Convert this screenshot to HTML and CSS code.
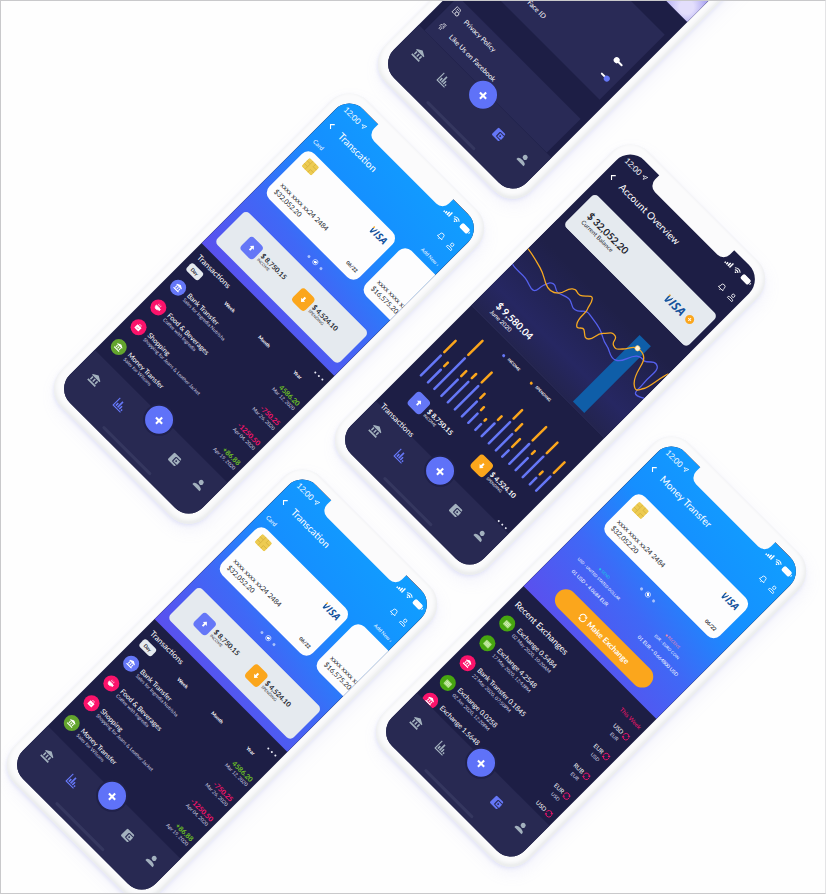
FILE: index.html
```html
<!DOCTYPE html>
<html lang="en">
<head>
<meta charset="utf-8">
<meta name="viewport" content="width=device-width, initial-scale=1">
<title>Wallet app screens</title>
<link rel="stylesheet" href="styles.css">
</head>
<body>
<svg class="sprite" aria-hidden="true">
  <symbol id="back" viewBox="0 0 8 8"><path d="M5.5 1 2.5 4l3 3" fill="none" stroke="currentColor" stroke-width="1.1"/></symbol>
  <symbol id="bell" viewBox="0 0 10 10"><path d="M1.5 7.5h7L7.6 6V4.2a2.6 2.6 0 0 0-5.2 0V6zM4 8.8h2" fill="none" stroke="currentColor" stroke-width=".9"/></symbol>
  <symbol id="user" viewBox="0 0 10 10"><circle cx="5" cy="3.2" r="1.8" fill="none" stroke="currentColor" stroke-width=".9"/><path d="M1.5 9V7.6c1-1.4 6-1.4 7 0V9z" fill="none" stroke="currentColor" stroke-width=".9"/></symbol>
  <symbol id="arrow" viewBox="0 0 8 8"><path d="M7.4.8 4.6 7.2 4 4.2 1 3.6z" fill="none" stroke="currentColor" stroke-width=".9"/></symbol>
  <symbol id="signal" viewBox="0 0 10 8"><path d="M1 7.5V5.8M3.6 7.5V4.4M6.2 7.5V2.8M8.8 7.5V1" stroke="currentColor" stroke-width="1.7"/></symbol>
  <symbol id="wifi" viewBox="0 0 10 8"><path d="M.8 3.2c2.4-2.3 6-2.3 8.4 0M2.5 5c1.5-1.4 3.5-1.4 5 0" fill="none" stroke="currentColor" stroke-width="1.2"/><path d="M3.7 6.2c.8-.7 1.8-.7 2.6 0L5 7.7z" fill="currentColor"/></symbol>
  <symbol id="battery" viewBox="0 0 13 7"><rect x=".5" y=".5" width="10.5" height="6" rx="1.8" fill="currentColor"/><path d="M12.2 2.5v2" stroke="currentColor" stroke-width="1"/></symbol>
  <symbol id="bank" viewBox="0 0 12 12"><path d="M6 .4 11.3 3.3v1.1H.7V3.3zM1.9 5.2h1.6v3.6H1.9zM5.2 5.2h1.6v3.6H5.2zM8.5 5.2h1.6v3.6H8.5zM.7 9.6h10.6v1.7H.7z" fill="currentColor"/></symbol>
  <symbol id="chart" viewBox="0 0 12 12"><path d="M1 .8V11h10.5" fill="none" stroke="currentColor" stroke-width="1.2"/><path d="M3.4 9.5V6M5.8 9.5V1.8M8.2 9.5V5.5M10.6 9.5V7.8" stroke="currentColor" stroke-width="1.6"/></symbol>
  <symbol id="wallet" viewBox="0 0 12 12"><path d="M2.2 1h7.6A1.2 1.2 0 0 1 11 2.2V2.8H6.2a1.2 1.2 0 0 0-1.2 1.2v4a1.2 1.2 0 0 0 1.2 1.2H11v.6A1.2 1.2 0 0 1 9.8 11H2.2A1.2 1.2 0 0 1 1 9.8V2.2A1.2 1.2 0 0 1 2.2 1zM6.2 3.8h5.4v4.4H6.2zM8.2 5.1a.9.9 0 1 0 0 1.8.9.9 0 0 0 0-1.8z" fill="currentColor" fill-rule="evenodd"/></symbol>
  <symbol id="person" viewBox="0 0 12 12"><circle cx="6" cy="3.4" r="2.5" fill="currentColor"/><path d="M1 10.8V9.3C1.8 6.6 10.2 6.6 11 9.3v1.5z" fill="currentColor"/></symbol>
  <symbol id="plus" viewBox="0 0 10 10"><path d="M5 1v8M1 5h8" stroke="currentColor" stroke-width="1.9"/></symbol>
  <symbol id="up" viewBox="0 0 8 8"><path d="M4 .8 6.8 3.8H5V7H3V3.8H1.2z" fill="currentColor"/></symbol>
  <symbol id="down" viewBox="0 0 8 8"><path d="M4 7.2 6.8 4.2H5V1H3v3.2H1.2z" fill="currentColor"/></symbol>
  <symbol id="food" viewBox="0 0 10 10"><path d="M1 4.5h6.5c0 2.5-1 4-3.2 4S1 7 1 4.5zM7.5 5h1.2c.8 1.5-.4 2.3-1.5 2.3M2.5 1l.6 2.4M4.5.8v2.6M6.6 1 6 3.4" fill="currentColor" stroke="currentColor" stroke-width=".8"/></symbol>
  <symbol id="bag" viewBox="0 0 10 10"><path d="M1.5 3.2h7V9h-7z" fill="currentColor"/><path d="M3.4 4.5V2.6a1.6 1.6 0 0 1 3.2 0v1.9" fill="none" stroke="currentColor" stroke-width=".8"/><path d="M3.6 6.5h2.8" stroke="#f4136b" stroke-width=".9"/></symbol>
  <symbol id="cash" viewBox="0 0 10 10"><rect x="1" y="1.8" width="8" height="6.4" rx=".8" fill="#a8dc7e"/><path d="M2 3.5h6M2 5h6M2 6.5h6" stroke="#e6f7d8" stroke-width=".7"/></symbol>
  <symbol id="swap" viewBox="0 0 10 10"><path d="M1.3 6A3.7 3.7 0 0 1 7.5 2.2M8.7 4A3.7 3.7 0 0 1 2.5 7.8" fill="none" stroke="currentColor" stroke-width="1.1"/><path d="M8.6.6v2.8H5.8zM1.4 9.4V6.6h2.8z" fill="currentColor"/></symbol>
  <symbol id="chip" viewBox="0 0 14 12"><rect width="14" height="12" rx="2" fill="#edcb52"/><path d="M0 4h5V0M0 8h5v4M9 0v4h5M9 12V8h5M5 4v4" fill="none" stroke="#d3ae3c" stroke-width=".7"/></symbol>
  <symbol id="policy" viewBox="0 0 10 10"><path d="M1.5 1h6v3M1.5 1v8h3M3 3h3M3 5h2" fill="none" stroke="currentColor" stroke-width=".8"/><circle cx="7" cy="7" r="2.2" fill="none" stroke="currentColor" stroke-width=".9"/></symbol>
  <symbol id="fb" viewBox="0 0 10 10"><path d="M7.5 1C5 .6 4.2 1.5 4.2 3.2v.9H2.8v1.9h1.4v3h1.9V6h1.2l.3-1.9H6.1v-.8c0-.6.4-.7 1.4-.6z" fill="none" stroke="currentColor" stroke-width=".8"/></symbol>
</svg>

<main class="stage">

  <article class="phone phone-settings">
    <div class="screen">
      <div class="content">
        <div class="photo"></div>
        <section class="group group-security">
          <div class="option"><span class="option-text option-indent"></span><input class="toggle" type="checkbox" aria-label="Notifications"></div>
          <label class="option"><span class="option-text option-indent">Face ID</span><input class="toggle" type="checkbox" checked></label>
        </section>
        <section class="group group-about">
          <a class="option" href="#privacy"><svg class="i10"><use href="#policy"/></svg><span class="option-text">Privacy Policy</span></a>
          <a class="option" href="#facebook"><svg class="i10"><use href="#fb"/></svg><span class="option-text">Like Us on Facebook</span></a>
        </section>
      </div>
      <nav class="tabbar">
        <button class="tab" aria-label="Bank"><svg><use href="#bank"/></svg></button>
        <button class="tab" aria-label="Overview"><svg><use href="#chart"/></svg></button>
        <button class="fab" aria-label="Add"><svg><use href="#plus"/></svg></button>
        <button class="tab active" aria-label="Wallet"><svg><use href="#wallet"/></svg></button>
        <button class="tab" aria-label="Profile"><svg><use href="#person"/></svg></button>
      </nav>
    </div>
  </article>

  <article class="phone phone-tx-a">
    <div class="screen">
      <div class="content">
        <section class="hero">
          <div class="status"><span>12:00</span><svg class="i6"><use href="#arrow"/></svg><svg class="sig"><use href="#signal"/></svg><svg class="wif"><use href="#wifi"/></svg><svg class="bat"><use href="#battery"/></svg></div>
          <header class="head"><button class="icon-btn" aria-label="Back"><svg class="i8"><use href="#back"/></svg></button><h1>Transcation</h1><button class="icon-btn" aria-label="Alerts"><svg class="i10"><use href="#bell"/></svg></button><button class="icon-btn" aria-label="Account"><svg class="i10"><use href="#user"/></svg></button></header>
          <div class="card-labels"><span>Card</span><a href="#new">Add New ›</a></div>
          <div class="cards">
            <div class="card"><svg class="chip"><use href="#chip"/></svg><span class="visa"><span class="v">V</span>ISA</span><span class="number">xxxx xxxx xx24 2484</span><span class="balance">$32,052.20</span><span class="expiry">06/22</span></div>
            <div class="card"><svg class="chip ghost"><use href="#chip"/></svg><span class="visa"></span><span class="number">xxxx xxxx xx24</span><span class="balance">$16,575.20</span></div>
          </div>
          <div class="dots"><i></i><i class="on"></i><i></i></div>
          <div class="panel">
            <div class="stat"><span class="badge income"><svg class="i8"><use href="#up"/></svg></span><p><b>$ 8,750.15</b><small>INCOME</small></p></div>
            <div class="stat"><span class="badge spend"><svg class="i8"><use href="#down"/></svg></span><p><b>$ 4,524.10</b><small>SPENDING</small></p></div>
          </div>
        </section>
        <section class="activity">
          <div class="title-row"><h2>Transactions</h2><button class="more" aria-label="More"><i></i><i></i><i></i></button></div>
          <div class="periods"><button class="on">Day</button><button>Week</button><button>Month</button><button>Year</button></div>
          <ul class="list">
            <li><span class="avatar blue"><svg class="i8"><use href="#bank"/></svg></span><p><b>Bank Transfer</b><small>Sales for Ingredia Nutrisha</small></p><p class="amount"><b class="gain">4586.20</b><small>Mar 12, 2020</small></p></li>
            <li><span class="avatar pink"><svg class="i8"><use href="#food"/></svg></span><p><b>Food &amp; Beverages</b><small>Coffee with Ingredia</small></p><p class="amount"><b class="loss">-750.25</b><small>Mar 26, 2020</small></p></li>
            <li><span class="avatar pink"><svg class="i8"><use href="#bag"/></svg></span><p><b>Shopping</b><small>Shopping for Jeans &amp; Leather Jacket</small></p><p class="amount"><b class="loss">-1250.50</b><small>Apr 04, 2020</small></p></li>
            <li><span class="avatar green"><svg class="i8"><use href="#bank"/></svg></span><p><b>Money Transfer</b><small>Sales for Wilsons</small></p><p class="amount"><b class="gain">+86.88</b><small>Apr 19, 2020</small></p></li>
          </ul>
        </section>
      </div>
      <nav class="tabbar">
        <button class="tab" aria-label="Bank"><svg><use href="#bank"/></svg></button>
        <button class="tab active" aria-label="Overview"><svg><use href="#chart"/></svg></button>
        <button class="fab" aria-label="Add"><svg><use href="#plus"/></svg></button>
        <button class="tab" aria-label="Wallet"><svg><use href="#wallet"/></svg></button>
        <button class="tab" aria-label="Profile"><svg><use href="#person"/></svg></button>
      </nav>
    </div>
  </article>

  <article class="phone phone-overview">
    <div class="screen">
      <div class="content spill">
        <div class="status"><span>12:00</span><svg class="i6"><use href="#arrow"/></svg><svg class="sig"><use href="#signal"/></svg><svg class="wif"><use href="#wifi"/></svg><svg class="bat"><use href="#battery"/></svg></div>
        <header class="head"><button class="icon-btn" aria-label="Back"><svg class="i8"><use href="#back"/></svg></button><h1>Account Overview</h1><button class="icon-btn" aria-label="Alerts"><svg class="i10"><use href="#bell"/></svg></button><button class="icon-btn" aria-label="Account"><svg class="i10"><use href="#user"/></svg></button></header>
        <div class="panel total"><p><b>$ 32,052.20</b><small>Current Balance</small></p><span class="visa big"><span class="v">V</span>ISA</span><button class="coin" aria-label="Add funds"><svg><use href="#plus"/></svg></button></div>
        <section class="trend">
          <svg class="plot" viewBox="0 0 188 122" preserveAspectRatio="none" aria-hidden="true">
            <rect x="140" y="24" width="16" height="95" fill="#0f5ea8"/>
            <path d="M0 64C6 66 12 64 19 65S29 69 33 68S35 62 37 57S39 50 43 49S48 53 53 52S62 47 67 49S74 54 79 51S84 44 90 45S100 46 107 48S117 54 124 55S134 62 141 59S147 46 153 41S160 42 164 38S171 31 175 34S176 45 177 55S176 68 179 69S185 67 188 66" fill="none" stroke="#5560ee" stroke-width="1.3"/>
            <path d="M0 42C8 43 15 45 22 47S31 51 37 54S48 57 53 52S55 43 60 39S65 40 70 38S78 28 81 32S83 39 85 43S84 55 88 61S93 58 97 60S103 67 107 63S108 54 113 49S118 41 123 42S124 48 129 50S134 50 138 46S143 36 148 35S158 34 161 40S164 57 171 63S178 63 181 59S185 36 188 31" fill="none" stroke="#f6a821" stroke-width="1.3"/>
            <circle cx="148" cy="35" r="2.6" fill="#fff6df" stroke="#fbc55e" stroke-width=".6"/>
          </svg>
          <p class="trend-total"><b>$ 9,580.04</b><small>June 2020</small></p>
        </section>
        <section class="monthly">
          <ul class="legend"><li class="in">INCOME</li><li class="out">SPENDING</li></ul>
          <svg class="plot" viewBox="0 0 188 90" preserveAspectRatio="none" aria-hidden="true">
            <path class="bar-in" d="M14 85V57M24 85V67M33 85V42M43 85V62M52 85V56M62 85V52M72 85V64M81 85V72M91 85V77M100 85V67M110 85V55M120 85V62M129 85V76M139 85V57M148 85V68M158 85V56M168 85V76M177 85V65"/>
            <path class="bar-out" d="M14 52V36M24 62V57M33 37V17M43 57V50M52 51V45M62 47V33M72 59V53M81 67V63M91 72V70M100 62V57M110 50V38M120 57V48M129 71V60M139 52V33M148 62V58M158 51V36M168 71V67M177 60V45"/>
          </svg>
        </section>
        <div class="stats-row">
          <div class="stat"><span class="badge income"><svg class="i8"><use href="#up"/></svg></span><p><b>$ 8,750.15</b><small>INCOME</small></p></div>
          <div class="stat"><span class="badge spend"><svg class="i8"><use href="#down"/></svg></span><p><b>$ 4,524.10</b><small>SPENDING</small></p></div>
        </div>
        <div class="title-row"><h2>Transactions</h2><button class="more" aria-label="More"><i></i><i></i><i></i></button></div>
      </div>
      <nav class="tabbar">
        <button class="tab" aria-label="Bank"><svg><use href="#bank"/></svg></button>
        <button class="tab active" aria-label="Overview"><svg><use href="#chart"/></svg></button>
        <button class="fab" aria-label="Add"><svg><use href="#plus"/></svg></button>
        <button class="tab" aria-label="Wallet"><svg><use href="#wallet"/></svg></button>
        <button class="tab" aria-label="Profile"><svg><use href="#person"/></svg></button>
      </nav>
    </div>
  </article>

  <article class="phone phone-tx-b">
    <div class="screen">
      <div class="content">
        <section class="hero">
          <div class="status"><span>12:00</span><svg class="i6"><use href="#arrow"/></svg><svg class="sig"><use href="#signal"/></svg><svg class="wif"><use href="#wifi"/></svg><svg class="bat"><use href="#battery"/></svg></div>
          <header class="head"><button class="icon-btn" aria-label="Back"><svg class="i8"><use href="#back"/></svg></button><h1>Transcation</h1><button class="icon-btn" aria-label="Alerts"><svg class="i10"><use href="#bell"/></svg></button><button class="icon-btn" aria-label="Account"><svg class="i10"><use href="#user"/></svg></button></header>
          <div class="card-labels"><span>Card</span><a href="#new">Add New ›</a></div>
          <div class="cards">
            <div class="card"><svg class="chip"><use href="#chip"/></svg><span class="visa"><span class="v">V</span>ISA</span><span class="number">xxxx xxxx xx24 2484</span><span class="balance">$32,052.20</span><span class="expiry">06/22</span></div>
            <div class="card"><svg class="chip ghost"><use href="#chip"/></svg><span class="visa"></span><span class="number">xxxx xxxx xx24</span><span class="balance">$16,575.20</span></div>
          </div>
          <div class="dots"><i></i><i class="on"></i><i></i></div>
          <div class="panel">
            <div class="stat"><span class="badge income"><svg class="i8"><use href="#up"/></svg></span><p><b>$ 8,750.15</b><small>INCOME</small></p></div>
            <div class="stat"><span class="badge spend"><svg class="i8"><use href="#down"/></svg></span><p><b>$ 4,524.10</b><small>SPENDING</small></p></div>
          </div>
        </section>
        <section class="activity">
          <div class="title-row"><h2>Transactions</h2><button class="more" aria-label="More"><i></i><i></i><i></i></button></div>
          <div class="periods"><button class="on">Day</button><button>Week</button><button>Month</button><button>Year</button></div>
          <ul class="list">
            <li><span class="avatar blue"><svg class="i8"><use href="#bank"/></svg></span><p><b>Bank Transfer</b><small>Sales for Ingredia Nutrisha</small></p><p class="amount"><b class="gain">4586.20</b><small>Mar 12, 2020</small></p></li>
            <li><span class="avatar pink"><svg class="i8"><use href="#food"/></svg></span><p><b>Food &amp; Beverages</b><small>Coffee with Ingredia</small></p><p class="amount"><b class="loss">-750.25</b><small>Mar 26, 2020</small></p></li>
            <li><span class="avatar pink"><svg class="i8"><use href="#bag"/></svg></span><p><b>Shopping</b><small>Shopping for Jeans &amp; Leather Jacket</small></p><p class="amount"><b class="loss">-1250.50</b><small>Apr 04, 2020</small></p></li>
            <li><span class="avatar green"><svg class="i8"><use href="#bank"/></svg></span><p><b>Money Transfer</b><small>Sales for Wilsons</small></p><p class="amount"><b class="gain">+86.88</b><small>Apr 19, 2020</small></p></li>
          </ul>
        </section>
      </div>
      <nav class="tabbar">
        <button class="tab" aria-label="Bank"><svg><use href="#bank"/></svg></button>
        <button class="tab active" aria-label="Overview"><svg><use href="#chart"/></svg></button>
        <button class="fab" aria-label="Add"><svg><use href="#plus"/></svg></button>
        <button class="tab" aria-label="Wallet"><svg><use href="#wallet"/></svg></button>
        <button class="tab" aria-label="Profile"><svg><use href="#person"/></svg></button>
      </nav>
    </div>
  </article>

  <article class="phone phone-transfer">
    <div class="screen">
      <div class="content">
        <section class="hero">
          <div class="status"><span>12:00</span><svg class="i6"><use href="#arrow"/></svg><svg class="sig"><use href="#signal"/></svg><svg class="wif"><use href="#wifi"/></svg><svg class="bat"><use href="#battery"/></svg></div>
          <header class="head"><button class="icon-btn" aria-label="Back"><svg class="i8"><use href="#back"/></svg></button><h1>Money Transfer</h1><button class="icon-btn" aria-label="Alerts"><svg class="i10"><use href="#bell"/></svg></button><button class="icon-btn" aria-label="Account"><svg class="i10"><use href="#user"/></svg></button></header>
          <div class="card wide"><svg class="chip"><use href="#chip"/></svg><span class="visa"><span class="v">V</span>ISA</span><span class="number">xxxx xxxx xx24 2484</span><span class="balance">$32,052.20</span><span class="expiry">06/22</span></div>
          <div class="dots"><i></i><i class="on"></i><i></i></div>
          <div class="rates">
            <p><em class="send">● SEND</em><small>USD - UNITED STATED DOLLAR</small><span>01 USD = 4.0684 EUR</span></p>
            <p><em class="receive">● RECEIVE</em><small>EUR - EURO COIN</small><span>01 EUR = 0.664800 USD</span></p>
          </div>
          <button class="exchange"><svg class="i10"><use href="#swap"/></svg>Make Exchange</button>
        </section>
        <section class="activity recent">
          <div class="title-row"><h2>Recent Exchanges</h2><a class="week" href="#week">This Week</a></div>
          <ul class="list">
            <li><span class="avatar lime"><svg class="i10"><use href="#cash"/></svg></span><p><b>Exchange 0.5484</b><small>02 May 2020, 10:20AM</small></p><p class="pair"><b>USD <svg class="i8"><use href="#swap"/></svg></b><small>EUR</small></p></li>
            <li><span class="avatar lime"><svg class="i10"><use href="#cash"/></svg></span><p><b>Exchange 4.2548</b><small>17 May 2020, 12:43PM</small></p><p class="pair"><b>EUR <svg class="i8"><use href="#swap"/></svg></b><small>USD</small></p></li>
            <li><span class="avatar pink"><svg class="i8"><use href="#bank"/></svg></span><p><b>Bank Transfer 0.1845</b><small>22 May 2020, 07:50PM</small></p><p class="pair"><b>RUB <svg class="i8"><use href="#swap"/></svg></b><small>EUR</small></p></li>
            <li><span class="avatar lime"><svg class="i10"><use href="#cash"/></svg></span><p><b>Exchange 0.0258</b><small>02 Jun 2020, 12:20PM</small></p><p class="pair"><b>EUR <svg class="i8"><use href="#swap"/></svg></b><small>USD</small></p></li>
            <li><span class="avatar pink"><svg class="i8"><use href="#bank"/></svg></span><p><b>Exchange 1.5648</b></p><p class="pair"><b>USD <svg class="i8"><use href="#swap"/></svg></b></p></li>
          </ul>
        </section>
      </div>
      <nav class="tabbar">
        <button class="tab" aria-label="Bank"><svg><use href="#bank"/></svg></button>
        <button class="tab" aria-label="Overview"><svg><use href="#chart"/></svg></button>
        <button class="fab" aria-label="Add"><svg><use href="#plus"/></svg></button>
        <button class="tab active" aria-label="Wallet"><svg><use href="#wallet"/></svg></button>
        <button class="tab" aria-label="Profile"><svg><use href="#person"/></svg></button>
      </nav>
    </div>
  </article>
</main>
</body>
</html>
```
FILE: styles.css
```css
* { box-sizing: border-box; }
body, h1, h2, p, ul { margin: 0; padding: 0; }
ul { list-style: none; }
body { font-family: Lato, "Liberation Sans", sans-serif; color: #fff; background: #fefefe; }
button { margin: 0; padding: 0; border: 0; background: none; color: inherit; font: inherit; }
a { color: inherit; text-decoration: none; }
svg { display: block; flex: none; }
.sprite { position: absolute; width: 0; height: 0; }

.stage { position: relative; min-height: 100vh; overflow: hidden; border: 1px solid #c9c9cb; border-right-color: #e4e4e6; }

/* Phones are placed freely on the canvas, each turned by 45 degrees. */
.phone {
  position: absolute;
  width: 206px;
  padding: 9px;
  border-radius: 26px;
  transform: rotate(45deg);
  background: #fbfbfc;
  box-shadow: inset 0 0 3px #f0f1f3, inset 0 -4px 5px -2px #e6e8e8, inset -4px 0 5px -2px #e6e8e8, 1px 2px 4px rgba(170, 175, 235, .25), 6px 4px 16px rgba(160, 160, 235, .1);
}
.phone-settings { left: 489px; top: -234px; }
.phone-tx-a { left: 165px; top: 91px; }
.phone-overview { left: 446px; top: 142px; }
.phone-tx-b { left: 118px; top: 467px; }
.phone-transfer { left: 487px; top: 434px; }

/* The notch grows out of the frame, over the top edge of the screen. */
.phone::after { content: ""; position: absolute; top: 6px; left: 50px; width: 106px; height: 18px; border-radius: 0 0 9px 9px; background: #fbfbfc; }

.screen {
  display: flex;
  flex-direction: column;
  height: 415px;
  border-radius: 20px;
  overflow: hidden;
  background: #1d1e45;
}
.content { flex: 1; min-height: 0; overflow: hidden; }
.content.spill { overflow: visible; }

.i6 { width: 6px; height: 6px; }
.i8 { width: 8px; height: 8px; }
.i10 { width: 9px; height: 9px; }

.hero { display: flex; flex-direction: column; height: 209px; background: linear-gradient(190deg, #109fff 0%, #158fff 38%, #3f68f6 68%, #5a50ee 100%); }
.status { display: flex; align-items: center; gap: 2px; height: 24px; padding: 0 5px 0 6px; font-size: 8px; }
.status .sig { width: 9px; height: 7px; margin-left: auto; }
.status .wif { width: 9px; height: 7px; }
.status .bat { width: 13px; height: 7px; }
.head { display: flex; align-items: center; height: 20px; padding: 0 5px 0 5px; }
.head h1 { flex: 1; margin-left: 8px; font-size: 10px; font-weight: 400; line-height: 12px; }
.icon-btn + .icon-btn { margin-left: 5px; }

.card-labels { display: flex; justify-content: space-between; padding: 9px 5px 5px 7px; font-size: 5px; line-height: 8px; }
.card-labels span { font-size: 6px; }
.cards { display: flex; gap: 9px; padding-left: 8px; }
.card {
  flex: none;
  display: grid;
  grid-template-columns: 1fr auto;
  grid-template-rows: 1fr 9px 8px;
  width: 128px;
  height: 64px;
  padding: 6px 6px 7px 7px;
  border-radius: 9px;
  background: #fdfdfe;
  color: #1c1d2b;
}
.card.wide { width: auto; height: 54px; margin: 16px 14px 0; padding: 7px 7px 6px 7px; }
.chip { width: 14px; height: 12px; margin-left: 1px; }
.ghost { visibility: hidden; }
.visa { font: italic 700 10px/12px "Open Sans", "Liberation Sans", sans-serif; color: #14529d; }
.visa.big { font-size: 12px; }
.v { color: transparent; background: linear-gradient(135deg, #f6a821 35%, #14529d 36%); -webkit-background-clip: text; background-clip: text; }
.number { grid-column: 1 / 3; font-size: 7px; line-height: 9px; }
.balance { font-size: 7px; line-height: 8px; }
.expiry { justify-self: end; font-size: 5px; font-weight: 700; line-height: 8px; }

.dots { display: flex; justify-content: center; align-items: center; gap: 4px; height: 24px; flex: none; }
.dots i { width: 3px; height: 3px; border-radius: 50%; background: #a9c1fb; }
.dots .on { width: 6px; height: 6px; border: 1px solid #a9c1fb; background: radial-gradient(#fff 45%, transparent 50%); }

.panel { display: flex; align-items: center; height: 45px; margin: 0 6px 0 8px; padding: 0 22px; border-radius: 5px; background: #e5eaef; color: #1c1d2b; }
.stat { display: flex; align-items: center; gap: 3px; flex: 1; }
.stat + .stat { margin-left: 15px; }
.stat b { display: block; font-size: 7px; line-height: 8px; font-weight: 700; white-space: nowrap; }
.stat small { display: block; font-size: 4px; line-height: 5px; }
.badge { display: grid; place-items: center; width: 18px; height: 18px; border-radius: 4px; color: #fff; flex: none; }
.income { background: #6577f7; }
.spend { background: #fba61c; }

.title-row { display: flex; align-items: center; justify-content: space-between; height: 20px; padding: 2px 5px 0 7px; }
h2 { font-size: 8px; line-height: 12px; font-weight: 400; }
.more { display: flex; gap: 3px; }
.more i { width: 2px; height: 2px; border-radius: 50%; background: #e7e8f4; }
.periods { display: flex; justify-content: space-between; height: 10px; padding: 0 22px 0 7px; margin-bottom: 4px; font-size: 5px; font-weight: 700; }
.periods .on { padding: 0 4px; border-radius: 3px; background: #e5eaef; color: #1c1d2b; }

.list li { display: flex; align-items: center; gap: 4px; height: 28px; padding: 0 5px 0 7px; white-space: nowrap; }
.list b { display: block; font-size: 7px; line-height: 8px; font-weight: 400; }
.list small { display: block; font-size: 5px; line-height: 6px; color: #d2d3e4; }
.avatar { display: grid; place-items: center; width: 16px; height: 16px; border-radius: 50%; flex: none; }
.blue { background: #6577f7; }
.pink { background: #fb136b; }
.green { background: #63a52e; }
.lime { background: #47a610; }
.amount { margin-left: auto; text-align: right; }
.list .amount b { font-weight: 700; }
.list .gain { color: #6cc024; }
.list .loss { color: #fb136b; }

.rates { display: flex; justify-content: space-between; padding: 0 16px 0 19px; text-align: center; white-space: nowrap; }
.rates em, .rates small, .rates span { display: block; font-style: normal; }
.rates em { font-size: 4px; line-height: 6px; }
.rates small { font-size: 4px; line-height: 10px; }
.rates span { font-size: 5px; line-height: 14px; }
.send { color: #16d3df; }
.receive { color: #f58aa5; }
.phone-transfer .dots { height: 26px; }
.exchange { display: flex; justify-content: center; align-items: center; gap: 3px; height: 22px; margin: 8px 29px 0; border-radius: 11px; background: #fba61c; font-size: 8px; font-weight: 700; }

.recent .title-row { height: 24px; padding-top: 10px; }
.recent h2 { font-size: 9px; }
.week { font-size: 6px; color: #fb136b; }
.recent small { line-height: 8px; }
.recent li:last-child { align-items: start; padding-top: 3px; }
.pair { margin-left: auto; }
.list .pair b { display: flex; align-items: center; gap: 1px; font-size: 6px; }
.list .pair small { padding-left: 4px; }
.pair svg { color: #fb136b; }

.panel.total { margin-top: 14px; padding: 0 13px 0 11px; }
.total p { flex: 1; }
.total b { display: block; font-size: 10px; line-height: 11px; font-weight: 700; }
.total small { display: block; font-size: 6px; line-height: 7px; }
.coin { display: grid; place-items: center; width: 9px; height: 9px; margin-left: 4px; border-radius: 50%; background: #fba61c; color: #fff; }
.coin svg { width: 5px; height: 5px; }
.trend { position: relative; display: flex; align-items: flex-end; height: 122px; padding: 0 18px 6px; border-bottom: 1px solid #2a2b57; background: linear-gradient(#1f2048 20%, #262762 75%, #23244f 100%); }
.plot { position: absolute; inset: 0; width: 100%; height: 100%; }
.trend-total { position: relative; }
.trend-total b { display: block; font-size: 10px; line-height: 12px; }
.trend-total small { display: block; font-size: 6px; line-height: 7px; }
.monthly { position: relative; height: 90px; }
.legend { display: flex; gap: 16px; padding: 9px 0 0 57px; font-size: 4px; font-weight: 700; line-height: 6px; }
.legend li { display: flex; align-items: center; gap: 4px; }
.legend li::before { content: ""; width: 3px; height: 3px; border-radius: 50%; background: #6577f7; }
.legend .out::before { background: #fba61c; }
.bar-in, .bar-out { fill: none; stroke-width: 2.5; stroke-linecap: round; stroke: #6577f7; }
.bar-out { stroke: #fba61c; }
.stats-row { display: flex; height: 32px; padding: 0 14px 0 23px; }
.stats-row .stat + .stat { margin-left: 27px; }
.spill .title-row { position: relative; z-index: 4; }

.photo { height: 168px; margin-bottom: 25px; background: radial-gradient(circle at 94% 94%, #e3defc 0 3%, transparent 9%), linear-gradient(100deg, #8f8bea 70%, #b9b3f5 88%, #a19bee); }
.group { margin: 0 7px 0 8px; background: #292a56; }
.group-security { height: 92px; padding-top: 42px; margin-bottom: 27px; }
.group-about { height: 48px; padding-top: 1px; }
.option { display: flex; align-items: center; gap: 8px; height: 21px; padding: 0 8px 0 5px; font-size: 7px; }
.group-security .option { height: 20px; }
.option-indent { flex: 1; padding-left: 48px; }
.toggle { appearance: none; position: relative; width: 10px; height: 2px; margin: 0; border-radius: 1px; background: #fff; }
.toggle::before { content: ""; position: absolute; top: -2px; left: -1px; width: 6px; height: 6px; border-radius: 50%; background: #fff; }
.toggle:checked::before { left: 5px; background: #6577f7; }

.tabbar { position: relative; z-index: 3; display: grid; grid-template-columns: 38fr 34fr 42fr 36fr 34fr; justify-items: center; align-items: start; height: 55px; padding: 0 2px; background: #282952; }
.tabbar::after { content: ""; grid-column: 1 / 6; width: 68px; height: 3px; border-radius: 2px; background: #35375f; }
.tab { display: grid; place-items: center; height: 42px; color: #a3b1be; }
.tab svg { width: 12px; height: 12px; }
.tab.active { color: #6577f7; }
.fab { display: grid; place-items: center; width: 28px; height: 28px; margin-top: -10px; border-radius: 50%; background: #5f72f8; box-shadow: 0 0 0 2px #20214a; }
.fab svg { width: 11px; height: 11px; }
.phone-settings .fab { box-shadow: none; }
```
